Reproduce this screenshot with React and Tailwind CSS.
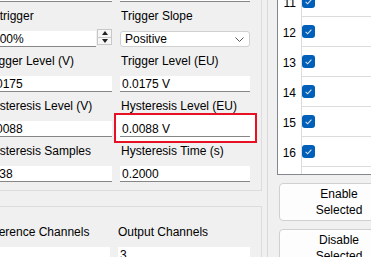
import React from "react";

// settings rows, first one sits mostly above the visible area
const rows = [
  [{ label: "Sample Rate (Hz)", value: "8192" }, { label: "Trigger Channel", value: "1" }],
  [{ label: "Pretrigger", value: "100%", kind: "spin" }, { label: "Trigger Slope", value: "Positive", kind: "select" }],
  [{ label: "Trigger Level (V)", value: "0.0175" }, { label: "Trigger Level (EU)", value: "0.0175 V" }],
  [{ label: "Hysteresis Level (V)", value: "0.0088" }, { label: "Hysteresis Level (EU)", value: "0.0088 V" }],
  [{ label: "Hysteresis Samples", value: "1638" }, { label: "Hysteresis Time (s)", value: "0.2000" }],
];

const channels = [11, 12, 13, 14, 15, 16, 17];

function TextBox({ value, className = "" }) {
  return (
    <div className={`h-[16px] bg-white border-b border-[#868686] pl-[2px] pt-[1px] leading-[15px] whitespace-nowrap overflow-hidden ${className}`}>
      {value}
    </div>
  );
}

function SpinBox({ value }) {
  return (
    <div className="flex h-[16px]">
      <div className="flex-1 bg-white border-b border-[#868686] pl-[9px] pt-[1px] leading-[15px] whitespace-nowrap overflow-hidden">
        {value}
      </div>
      <div className="w-[15px] h-[16px] -mt-[2px] ml-[1px] flex flex-col border border-[#c8c8c8] bg-[#f6f6f6]">
        <div className="flex-1 flex items-center justify-center border-b border-[#c8c8c8]">
          <svg width="6" height="4" viewBox="0 0 6 4"><path d="M0 4 L3 0 L6 4 Z" fill="#222" /></svg>
        </div>
        <div className="flex-1 flex items-center justify-center">
          <svg width="6" height="4" viewBox="0 0 6 4"><path d="M0 0 L3 4 L6 0 Z" fill="#222" /></svg>
        </div>
      </div>
    </div>
  );
}

function Select({ value }) {
  return (
    <div className="h-[16px] bg-white border border-[#d0d0d0] rounded-[3px] flex items-center justify-between pl-[4px] pr-[5px] leading-[14px]">
      <span>{value}</span>
      <svg width="9" height="5" viewBox="0 0 9 5">
        <path d="M0.5 0.5 L4.5 4.5 L8.5 0.5" fill="none" stroke="#555" strokeWidth="1" />
      </svg>
    </div>
  );
}

function Field({ label, children, labelClass = "pl-[1px]" }) {
  return (
    <div className="flex flex-col">
      <div className={`h-[14px] leading-[14px] whitespace-nowrap ${labelClass}`}>{label}</div>
      <div className="mt-[8px] h-[16px]">{children}</div>
    </div>
  );
}

function Check() {
  return (
    <div className="w-[13px] h-[13px] rounded-[3px] bg-[#005fb8] flex items-center justify-center">
      <svg width="13" height="13" viewBox="0 0 13 13">
        <path d="M3.6 6.9 L5.6 8.8 L9.4 4.6" fill="none" stroke="#dbe8f6" strokeWidth="1.1" />
      </svg>
    </div>
  );
}

export default function App() {
  return (
    <div
      className="relative w-[371px] h-[257px] overflow-hidden bg-[#f0f0f0] flex text-[12px] text-black"
      style={{ fontFamily: '"Liberation Sans", Arial, sans-serif' }}
    >
      {/* highlight around the edited field */}
      <div className="absolute left-[114px] top-[113px] w-[143px] h-[30px] border-2 border-[#e81123] bg-white" />

      <div className="relative w-[262px] flex flex-col">
        {/* trigger settings group */}
        <div className="h-[191px] shrink-0 border-r border-b border-[#dcdcdc] overflow-hidden">
          <div className="grid grid-cols-[128px_130px] gap-x-[8px] gap-y-[7px] -ml-[16px] -mt-[36px]">
            {rows.map((row, i) =>
              row.map((f, j) => (
                <Field
                  key={`${i}-${j}`}
                  label={f.label}
                  labelClass={f.kind === "spin" ? "ml-[-4px] pl-[1px]" : "pl-[1px]"}
                >
                  {f.kind === "spin" ? (
                    <SpinBox value={f.value} />
                  ) : f.kind === "select" ? (
                    <Select value={f.value} />
                  ) : (
                    <TextBox value={f.value} />
                  )}
                </Field>
              ))
            )}
          </div>
        </div>

        {/* channels group */}
        <div className="mt-[15px] flex-1 border-t border-r border-[#dcdcdc] overflow-hidden pt-[18px]">
          <div className="grid grid-cols-[130px_132px] gap-x-[8px] -ml-[20px]">
            <Field label="Reference Channels" labelClass="">
              <TextBox value="" />
            </Field>
            <Field label="Output Channels" labelClass="">
              <TextBox value="3" />
            </Field>
          </div>
        </div>
      </div>

      {/* channel list */}
      <div className="ml-[5px] flex-1 border-l border-[#d9d9d9] pl-[9px] flex flex-col overflow-hidden">
        <div className="w-[200px] h-[175px] shrink-0 bg-white border-l border-b border-[#828790] overflow-hidden">
          <div className="-mt-[13px] flex flex-col">
            {channels.map((n) => (
              <div key={n} className="h-[30px] shrink-0 flex">
                <div className="w-[23px] flex items-center justify-end pr-[5px] pt-[1px]">{n}</div>
                <div className="flex-1 flex items-center border-l border-b border-[#dcdcdc]">
                  <Check />
                </div>
              </div>
            ))}
          </div>
        </div>

        <div className="mt-[8px] ml-[2px] w-[120px] h-[38px] shrink-0 rounded-[4px] border border-[#d0d0d0] bg-[#fdfdfd] flex flex-col items-center justify-center leading-[16px]">
          <span>Enable</span>
          <span>Selected</span>
        </div>
        <div className="mt-[8px] ml-[2px] w-[120px] h-[38px] shrink-0 rounded-[4px] border border-[#d0d0d0] bg-[#fdfdfd] flex flex-col items-center justify-center leading-[16px]">
          <span>Disable</span>
          <span>Selected</span>
        </div>
      </div>
    </div>
  );
}
